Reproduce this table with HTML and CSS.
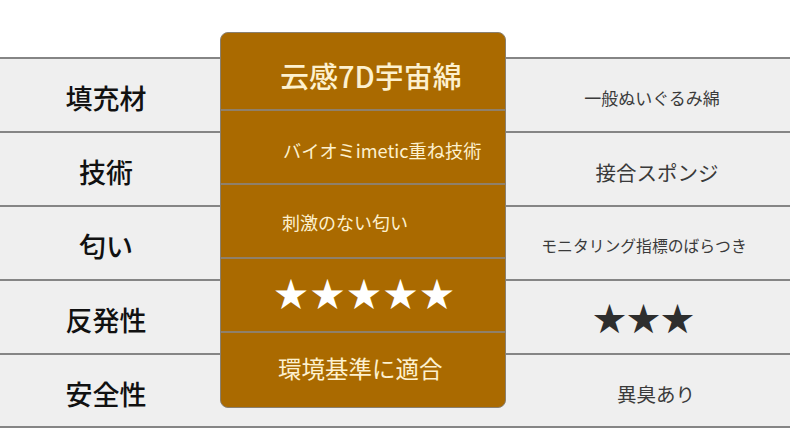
FILE: index.html
```html
<!DOCTYPE html>
<html lang="ja">
<head>
<meta charset="utf-8">
<link rel="stylesheet" href="styles.css">
</head>
<body>
<div class="compare">
  <div class="table">
    <div class="row"><div class="label">填充材</div><div class="mid"></div><div class="other s17">一般ぬいぐるみ綿</div></div>
    <div class="row"><div class="label">技術</div><div class="mid"></div><div class="other s20">接合スポンジ</div></div>
    <div class="row"><div class="label">匂い</div><div class="mid"></div><div class="other s16">モニタリング指標のばらつき</div></div>
    <div class="row"><div class="label">反発性</div><div class="mid"></div><div class="other stars">★★★</div></div>
    <div class="row last"><div class="label">安全性</div><div class="mid"></div><div class="other s20b">異臭あり</div></div>
  </div>
  <div class="card">
    <div class="cell c1">云感7D宇宙綿</div>
    <div class="cell c2">バイオミimetic重ね技術</div>
    <div class="cell c3">刺激のない匂い</div>
    <div class="cell c4">★★★★★</div>
    <div class="cell c5">環境基準に適合</div>
  </div>
</div>
</body>
</html>
```
FILE: styles.css
```css
html, body {
  margin: 0;
  padding: 0;
  background: #ffffff;
}
body {
  font-family: "Noto Sans CJK JP", "Noto Sans", sans-serif;
  width: 790px;
  height: 441px;
  overflow: hidden;
}
.compare {
  position: relative;
  padding-top: 57px;
}
.table {
  display: flex;
  flex-direction: column;
}
.row {
  display: grid;
  grid-template-columns: 220px 286px 1fr;
  height: 72px;
  border-top: 2px solid #858585;
  background: #efefef;
  box-sizing: content-box;
}
.row.last {
  height: 71px;
  border-bottom: 2px solid #858585;
}
.label {
  display: flex;
  align-items: center;
  justify-content: center;
  padding-right: 8px;
  padding-top: 5px;
  font-size: 27px;
  font-weight: 500;
  color: #111;
}
.other {
  display: flex;
  align-items: center;
  justify-content: center;
  color: #3a3a3a;
  padding-top: 5px;
  padding-right: 6px;
}
.s16 { font-size: 15.8px; padding-right: 8px; }
.s17 { font-size: 17px; padding-left: 14px; }
.s20 { font-size: 20.5px; padding-left: 24px; }
.s20b { font-size: 19.5px; padding-left: 22px; }
.stars {
  font-size: 33px;
  color: #2e2e2e;
  letter-spacing: 1px;
  padding-top: 0;
  padding-right: 8px;
}
.card {
  position: absolute;
  top: 32px;
  left: 220px;
  width: 286px;
  height: 376px;
  box-sizing: border-box;
  background: #aa6a00;
  border: 1px solid #8a8070;
  border-radius: 8px;
  display: flex;
  flex-direction: column;
  overflow: hidden;
}
.cell {
  display: flex;
  align-items: center;
  color: #fdf1cf;
  border-top: 2px solid #8f806a;
  box-sizing: border-box;
}
.c1 { height: 76px; border-top: none; font-size: 29px; font-weight: 500; padding-left: 59px; padding-top: 7px; }
.c2 { height: 74px; font-size: 18.2px; padding-left: 62px; padding-top: 5px; }
.c3 { height: 74px; font-size: 18px; padding-left: 61px; padding-top: 2px; }
.c4 { height: 74px; font-size: 34px; color: #fff; padding-left: 53px; letter-spacing: 2.5px; padding-bottom: 6px; }
.c5 { flex: 1; font-size: 23.5px; padding-left: 57px; padding-bottom: 4px; }
```
